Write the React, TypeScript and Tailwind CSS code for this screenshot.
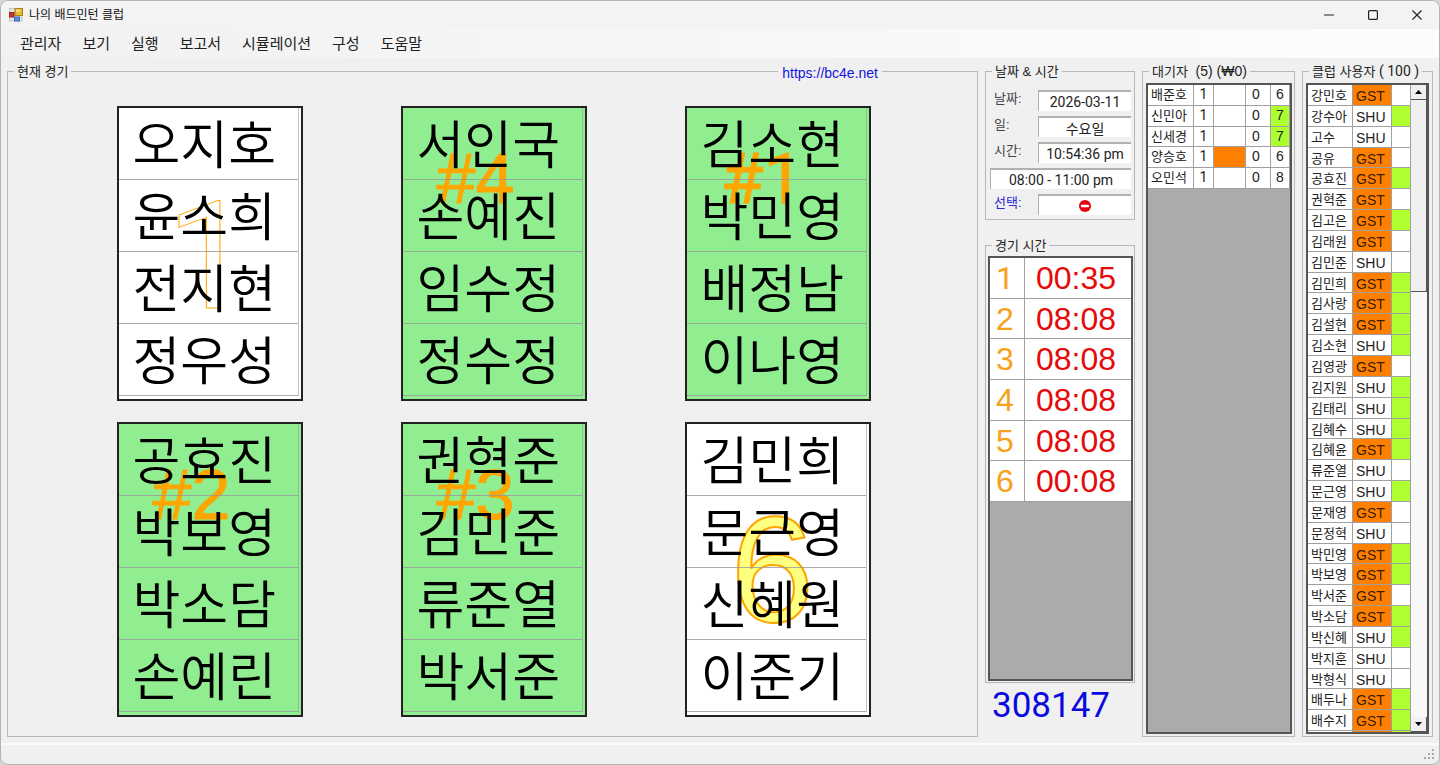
import React from 'react';
import clsx from 'clsx';

interface Court {
  players: string[];
  mark: string;
  markClass: string;
  busy: boolean;
}

const SANS = "font-['Liberation_Sans','Noto_Sans_CJK_KR',sans-serif]";
const NUM = "font-['Roboto','Noto_Sans_CJK_KR',sans-serif]";

const QUEUE_MARK = 'left-[34px] top-9 text-[70px] text-[#ffa500] [-webkit-text-stroke:1px_#ffa500]';

const courts: Court[] = [
  {
    players: ['오지호', '윤소희', '전지현', '정우성'],
    mark: '1',
    markClass: "left-12 top-[74px] text-[150px] font-['Roboto'] text-transparent [-webkit-text-stroke:1px_orange]",
    busy: false,
  },
  {
    players: ['서인국', '손예진', '임수정', '정수정'],
    mark: '#4',
    markClass: QUEUE_MARK,
    busy: true,
  },
  {
    players: ['김소현', '박민영', '배정남', '이나영'],
    mark: '#1',
    markClass: clsx(QUEUE_MARK, NUM),
    busy: true,
  },
  {
    players: ['공효진', '박보영', '박소담', '손예린'],
    mark: '#2',
    markClass: QUEUE_MARK,
    busy: true,
  },
  {
    players: ['권혁준', '김민준', '류준열', '박서준'],
    mark: '#3',
    markClass: QUEUE_MARK,
    busy: true,
  },
  {
    players: ['김민희', '문근영', '신혜원', '이준기'],
    mark: '6',
    markClass: 'left-11 top-[71px] text-[150px] text-[#ffff80] [-webkit-text-stroke:2px_orange]',
    busy: false,
  },
];

const menus = ['관리자', '보기', '실행', '보고서', '시뮬레이션', '구성', '도움말'];

const timers = ['00:35', '08:08', '08:08', '08:08', '08:08', '00:08'];

const waiting = [
  { name: '배준호', level: 1, guest: false, games: 0, score: 6 },
  { name: '신민아', level: 1, guest: false, games: 0, score: 7 },
  { name: '신세경', level: 1, guest: false, games: 0, score: 7 },
  { name: '양승호', level: 1, guest: true, games: 0, score: 6 },
  { name: '오민석', level: 1, guest: false, games: 0, score: 8 },
];

// [name, type, present]
const members: [string, string, boolean][] = [
  ['강민호', 'GST', false],
  ['강수아', 'SHU', true],
  ['고수', 'SHU', false],
  ['공유', 'GST', false],
  ['공효진', 'GST', true],
  ['권혁준', 'GST', false],
  ['김고은', 'GST', true],
  ['김래원', 'GST', false],
  ['김민준', 'SHU', false],
  ['김민희', 'GST', true],
  ['김사랑', 'GST', true],
  ['김설현', 'GST', true],
  ['김소현', 'SHU', true],
  ['김영광', 'GST', false],
  ['김지원', 'SHU', true],
  ['김태리', 'SHU', true],
  ['김혜수', 'SHU', true],
  ['김혜윤', 'GST', true],
  ['류준열', 'SHU', false],
  ['문근영', 'SHU', true],
  ['문재영', 'GST', false],
  ['문정혁', 'SHU', false],
  ['박민영', 'GST', true],
  ['박보영', 'GST', true],
  ['박서준', 'GST', false],
  ['박소담', 'GST', true],
  ['박신혜', 'SHU', true],
  ['박지훈', 'SHU', false],
  ['박형식', 'SHU', false],
  ['배두나', 'GST', true],
  ['배수지', 'GST', true],
];

const AppIcon = () => (
  <svg width="14" height="14" viewBox="0 0 14 14" aria-hidden="true">
    <rect x="0.5" y="0.5" width="12.5" height="12.5" fill="#e4e4e4" stroke="#c4c4c4" />
    <rect x="6" y="0.5" width="7.5" height="7" fill="#e9b92c" stroke="#a98218" />
    <rect x="7" y="1.5" width="4" height="2.5" fill="#f8dc78" />
    <rect x="0.5" y="4.5" width="4.5" height="4.5" fill="#c8382e" stroke="#9a2a22" />
    <rect x="5.5" y="9" width="5" height="4" fill="#5b8fe0" stroke="#3f6fc0" />
  </svg>
);

const GroupBox = ({ title, className, children }: {
  title: React.ReactNode;
  className?: string;
  children: React.ReactNode;
}) => (
  <fieldset className={clsx('min-w-0 min-h-0 flex flex-col border border-[#b8b8b8]', className)}>
    <legend className="ml-1.5 h-4 px-[3px] text-[13px] leading-[18px] whitespace-pre text-[#222]">{title}</legend>
    {children}
  </fieldset>
);

const CourtCard = ({ court }: { court: Court }) => (
  <div
    className={clsx(
      'relative h-[295px] border-2 border-[#222] pr-[2px]',
      court.busy ? 'bg-[#90ee90]' : 'bg-white'
    )}
  >
    <span className={clsx('absolute leading-none', court.markClass)}>{court.mark}</span>
    <ul className="relative border-r border-[#999]/60">
      {court.players.map(player => (
        <li
          key={player}
          className="flex h-[72px] items-center border-b border-[#999]/80 pt-1 pl-3.5 text-[52px] leading-none font-[350] text-black"
        >
          {player}
        </li>
      ))}
    </ul>
  </div>
);

const Field = ({ id, label, value }: { id: string; label: string; value: string }) => (
  <>
    <label htmlFor={id} className="pl-1 text-[13px] leading-[18px] text-[#444]">{label}</label>
    <input
      id={id}
      readOnly
      value={value}
      className={clsx('h-[21px] w-full min-w-0 border-t-2 border-l border-[#b0b0b0] bg-white text-center text-sm text-[#222] outline-none', NUM)}
    />
  </>
);

const ScrollArrow = ({ up }: { up?: boolean }) => (
  <button
    type="button"
    aria-label={up ? '위로' : '아래로'}
    className="flex h-[15px] shrink-0 items-center justify-center border-r border-b border-[#555] bg-[#f0f0f0]"
  >
    <svg width="7" height="4" viewBox="0 0 7 4" aria-hidden="true">
      <path d={up ? 'M0 4 3.5 0 7 4z' : 'M0 0h7L3.5 4z'} fill="#000" />
    </svg>
  </button>
);

const App: React.FC = () => {
  return (
    <div className="h-screen bg-[#d6d6d6]">
      <div className={clsx('flex h-full flex-col overflow-hidden rounded-lg border border-[#b4b4b4] bg-[#f0f0f0] text-[#222]', SANS)}>
        <header className="flex h-7 shrink-0 items-center bg-[#f3f3f3] pl-2">
          <AppIcon />
          <h1 className="ml-1.5 flex-1 text-xs text-[#111]">나의 배드민턴 클럽</h1>
          <button type="button" aria-label="최소화" className="flex h-full w-11 items-center justify-center">
            <svg width="10" height="10" viewBox="0 0 10 10"><path d="M0 5h10" stroke="#222" strokeWidth="1.2" /></svg>
          </button>
          <button type="button" aria-label="최대화" className="flex h-full w-11 items-center justify-center">
            <svg width="10" height="10" viewBox="0 0 10 10"><rect x="0.6" y="0.6" width="8.8" height="8.8" rx="1" fill="none" stroke="#222" strokeWidth="1.2" /></svg>
          </button>
          <button type="button" aria-label="닫기" className="flex h-full w-11 items-center justify-center">
            <svg width="10" height="10" viewBox="0 0 10 10"><path d="M0.5 0.5 9.5 9.5M9.5 0.5 0.5 9.5" stroke="#222" strokeWidth="1.2" /></svg>
          </button>
        </header>

        <nav className="flex h-[29px] shrink-0 items-center gap-px bg-linear-to-r from-[#f1f1f1] to-[#fdfdfd] pl-[9px]">
          {menus.map(menu => (
            <button key={menu} type="button" className="px-2.5 text-[15px] leading-5 text-[#222]">{menu}</button>
          ))}
        </nav>

        <main className="flex min-h-0 flex-1 gap-[7px] px-1.5 pt-[5px] pb-1.5">
          <div className="relative flex min-w-0 flex-1">
            <GroupBox title="현재 경기" className="flex-1">
              <div className="grid grid-cols-[repeat(3,186px)] justify-center gap-x-[98px] gap-y-[21px] pt-[27px] pl-0.5">
                {courts.map(court => (
                  <CourtCard key={court.players[0]} court={court} />
                ))}
              </div>
            </GroupBox>
            <a
              href="https://bc4e.net"
              className="absolute top-0 right-24 bg-[#f0f0f0] px-1 text-sm leading-5 text-[#1414e0]"
            >
              https://bc4e.net
            </a>
          </div>

          <div className="flex w-[150px] shrink-0 flex-col">
            <GroupBox title="날짜 & 시간" className="shrink-0">
              <div className="grid grid-cols-[44px_1fr] gap-x-1 gap-y-[5px] pt-[11px] pr-[3px] pb-1 pl-1">
                <Field id="date" label="날짜:" value="2026-03-11" />
                <Field id="day" label="일:" value="수요일" />
                <Field id="time" label="시간:" value="10:54:36 pm" />
                <input
                  readOnly
                  aria-label="운영 시간"
                  value="08:00 - 11:00 pm"
                  className={clsx('col-span-2 h-[21px] w-full border-t-2 border-l border-[#b0b0b0] bg-white text-center text-sm text-[#222] outline-none', NUM)}
                />
                <label htmlFor="select" className="pl-1 text-[13px] leading-[18px] text-[#2a2ad8]">선택:</label>
                <button
                  id="select"
                  type="button"
                  className="flex h-[21px] items-center justify-center border-t-2 border-l border-[#b0b0b0] bg-white"
                >
                  <svg width="12" height="12" viewBox="0 0 12 12" aria-hidden="true">
                    <circle cx="6" cy="6" r="6" fill="#e60012" />
                    <rect x="2" y="4.8" width="8" height="2.4" rx="0.6" fill="#fff" />
                  </svg>
                </button>
              </div>
            </GroupBox>

            <GroupBox title="경기 시간" className="mt-[17px] flex-1">
              <div className="mt-[3px] mr-px mb-px ml-0.5 min-h-0 flex-1 border-2 border-[#555] bg-[#ababab]">
                <table className="w-full table-fixed">
                  <tbody className="grid h-[244px] auto-rows-fr gap-px bg-[#a0a0a0] pb-px">
                    {timers.map((time, index) => (
                      <tr key={index} className="grid grid-cols-[34px_1fr] gap-px text-[32px] leading-[37px] *:bg-white *:pt-0.5">
                        <td className={clsx('pr-1 text-center text-[#f5a11a]', index === 0 && NUM)}>{index + 1}</td>
                        <td className="pr-1 text-center text-[#e60a0a]">{time}</td>
                      </tr>
                    ))}
                  </tbody>
                </table>
              </div>
            </GroupBox>
            <p className={clsx('h-[54px] shrink-0 pl-[7px] text-[35px] leading-[46px] text-[#0a0ae0]', NUM)}>308147</p>
          </div>

          <GroupBox title={<>대기자 <span className="pl-1 text-sm leading-4">(5) (₩0)</span></>} className="w-[153px] shrink-0">
            <div className="mt-1 mr-0.5 mb-0.5 ml-[3px] min-h-0 flex-1 border-2 border-[#555] bg-[#ababab]">
              <table className="w-full table-fixed">
                <tbody className="grid h-[104px] auto-rows-fr gap-px bg-[#a0a0a0] pb-px">
                  {waiting.map(row => (
                    <tr key={row.name} className="grid min-h-0 grid-cols-[45px_19px_31px_24px_1fr] gap-px pr-px text-center leading-[19px]">
                      <td className="bg-white pl-[3px] text-left text-[13px]">{row.name}</td>
                      <td className={clsx('bg-white text-sm leading-[19px]', NUM)}>{row.level}</td>
                      <td className={row.guest ? 'bg-[#ff8000]' : 'bg-white'}></td>
                      <td className="bg-white pr-1 text-sm leading-[19px]">{row.games}</td>
                      <td className={clsx('text-sm leading-[19px]', row.score === 7 ? 'bg-[#adff2f]' : 'bg-white')}>{row.score}</td>
                    </tr>
                  ))}
                </tbody>
              </table>
            </div>
          </GroupBox>

          <GroupBox title={<>클럽 사용자<span className={clsx('text-sm leading-4', NUM)}> ( 100 )</span></>} className="w-[131px] shrink-0">
            <div className="mx-[3px] mt-1 mb-0.5 flex min-h-0 flex-1 overflow-hidden border-2 border-[#555] bg-[#ababab]">
              <div className="min-w-0 flex-1 overflow-hidden">
                <table className="w-full table-fixed">
                  <tbody className="grid h-[666px] auto-rows-fr gap-px bg-[#a0a0a0]">
                    {members.map(([name, type, present]) => (
                      <tr key={name} className="grid min-h-0 grid-cols-[44px_38px_1fr] gap-px pr-px leading-[22px]">
                        <td className="overflow-hidden bg-white pl-[3px] text-[13px]">{name}</td>
                        <td
                          className={clsx(
                            'overflow-hidden pl-[3px] text-sm leading-[22px]',
                            type === 'GST' ? 'bg-[#ff8000] text-[#3a1c00]' : 'bg-white'
                          )}
                        >
                          {type}
                        </td>
                        <td className={present ? 'bg-[#adff2f]' : 'bg-white'}></td>
                      </tr>
                    ))}
                    <tr className="grid grid-cols-[44px_38px_1fr] gap-px pr-px">
                      <td className="bg-white"></td>
                      <td className="bg-[#ff8000]"></td>
                      <td className="bg-[#adff2f]"></td>
                    </tr>
                  </tbody>
                </table>
              </div>
              <div className="flex w-4 shrink-0 flex-col bg-[#f8f8f8]">
                <ScrollArrow up />
                <div className="h-[192px] shrink-0 border-r border-b border-[#555] bg-[#f0f0f0]"></div>
                <div className="flex-1"></div>
                <ScrollArrow />
              </div>
            </div>
          </GroupBox>
        </main>

        <footer className="flex h-[21px] shrink-0 items-end justify-end border-t-2 border-[#fafafa] p-1">
          <svg width="11" height="11" viewBox="0 0 11 11" fill="#a8a8a8" aria-hidden="true">
            <path d="M8 0h2v2H8zM4 4h2v2H4zM8 4h2v2H8zM0 8h2v2H0zM4 8h2v2H4zM8 8h2v2H8z" />
          </svg>
        </footer>
      </div>
    </div>
  );
};

export default App;
